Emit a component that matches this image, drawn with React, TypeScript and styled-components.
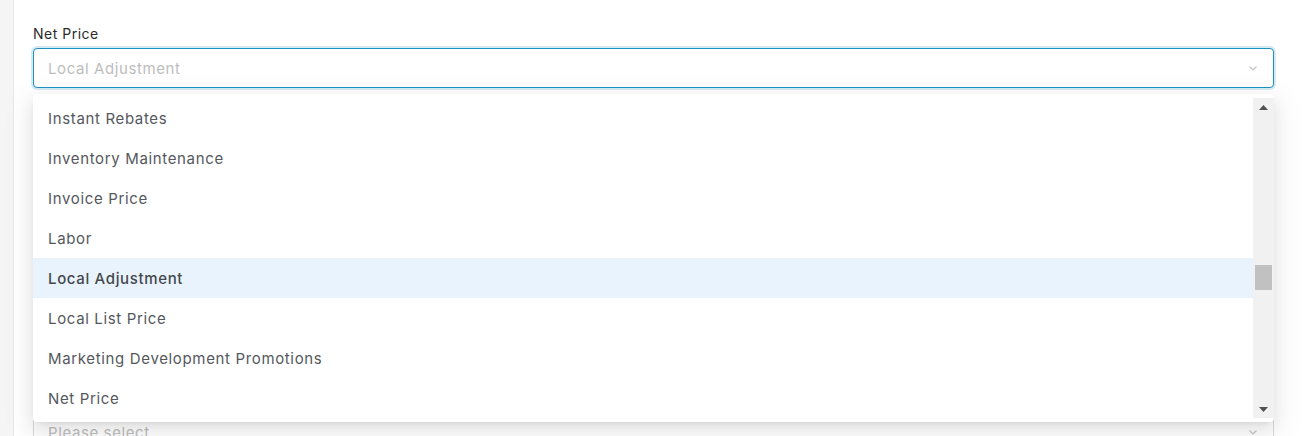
import React from "react";
import styled, { createGlobalStyle } from "styled-components";

const GlobalStyle = createGlobalStyle`
  html, body {
    margin: 0;
    padding: 0;
    background: #ffffff;
    font-family: Inter, "Noto Sans", sans-serif;
  }
`;

// option list, only the visible slice of the scrolled list
const options = [
  "Instant Rebates",
  "Inventory Maintenance",
  "Invoice Price",
  "Labor",
  "Local Adjustment",
  "Local List Price",
  "Marketing Development Promotions",
  "Net Price",
];
const selected = "Local Adjustment";

const Page = styled.div`
  display: flex;
  height: 436px;
  overflow: hidden;
`;

const SideStrip = styled.div`
  width: 13px;
  flex-shrink: 0;
  background: #f5f5f6;
  border-right: 1px solid #e9e9eb;
`;

const Content = styled.div`
  flex: 1;
  padding: 23px 31px 0 19px;
  display: flex;
  flex-direction: column;
`;

const Field = styled.div<{ $gap?: number }>`
  display: flex;
  flex-direction: column;
  margin-bottom: ${({ $gap }) => $gap ?? 24}px;
`;

const Label = styled.label`
  font-size: 14px;
  line-height: 22px;
  letter-spacing: 0.5px;
  color: #2b2b2b;
  margin-bottom: 3px;
`;

const SelectWrap = styled.div`
  position: relative;
`;

const SelectBox = styled.div<{ $focused?: boolean }>`
  height: 40px;
  box-sizing: border-box;
  border: 1px solid ${({ $focused }) => ($focused ? "#1f8fc4" : "#d9d9d9")};
  border-radius: 4px;
  box-shadow: ${({ $focused }) =>
    $focused ? "0 0 0 2px rgba(31, 143, 196, 0.18)" : "none"};
  display: flex;
  align-items: center;
  padding: 0 14px;
  font-size: 15px;
  letter-spacing: 0.6px;
  color: #bdbdbd;
  background: #fff;
`;

const Value = styled.span`
  flex: 1;
`;

const Chevron = () => (
  <svg width="12" height="12" viewBox="0 0 12 12" fill="none">
    <path d="M2.5 4.5 L6 8 L9.5 4.5" stroke="#c4c4c4" strokeWidth="1.2" />
  </svg>
);

const Dropdown = styled.div`
  position: absolute;
  top: 46px;
  left: 0;
  right: 0;
  z-index: 10;
  background: #fff;
  border-radius: 4px;
  padding: 4px 0;
  box-shadow: 0 3px 6px -4px rgba(0, 0, 0, 0.12),
    0 6px 16px 0 rgba(0, 0, 0, 0.08), 0 9px 28px 8px rgba(0, 0, 0, 0.05);
  display: flex;
`;

const OptionList = styled.div`
  flex: 1;
  display: flex;
  flex-direction: column;
`;

const Option = styled.div<{ $active?: boolean }>`
  height: 40px;
  display: flex;
  align-items: center;
  padding: 0 15px;
  font-size: 15px;
  letter-spacing: 0.65px;
  color: ${({ $active }) => ($active ? "#45484c" : "#55585d")};
  font-weight: ${({ $active }) => ($active ? 500 : 400)};
  background: ${({ $active }) => ($active ? "#e9f3fd" : "transparent")};
`;

const ScrollTrack = styled.div`
  width: 21px;
  background: #f1f1f1;
  display: flex;
  flex-direction: column;
  align-items: center;
`;

const ScrollArrow = styled.div`
  height: 18px;
  width: 100%;
  display: flex;
  align-items: center;
  justify-content: center;
`;

const ThumbArea = styled.div`
  flex: 1;
  width: 100%;
  display: flex;
  flex-direction: column;
  padding-top: 149px;
`;

const Thumb = styled.div`
  height: 25px;
  margin: 0 2px 0 2px;
  background: #c1c1c1;
`;

const Arrow = ({ down }: { down?: boolean }) => (
  <svg width="9" height="5" viewBox="0 0 9 5">
    <path
      d={down ? "M0 0 H9 L4.5 5 Z" : "M0 5 H9 L4.5 0 Z"}
      fill="#505050"
    />
  </svg>
);

const App = () => {
  return (
    <>
      <GlobalStyle />
      <Page>
        <SideStrip />
        <Content>
          <Field $gap={324}>
            <Label>Net Price</Label>
            <SelectWrap>
              <SelectBox $focused>
                <Value>Local Adjustment</Value>
                <Chevron />
              </SelectBox>
              <Dropdown>
                <OptionList>
                  {options.map((o) => (
                    <Option key={o} $active={o === selected}>
                      {o}
                    </Option>
                  ))}
                </OptionList>
                <ScrollTrack>
                  <ScrollArrow>
                    <Arrow />
                  </ScrollArrow>
                  <ThumbArea>
                    <Thumb />
                  </ThumbArea>
                  <ScrollArrow>
                    <Arrow down />
                  </ScrollArrow>
                </ScrollTrack>
              </Dropdown>
            </SelectWrap>
          </Field>
          <Field>
            <SelectBox>
              <Value>Please select</Value>
              <Chevron />
            </SelectBox>
          </Field>
        </Content>
      </Page>
    </>
  );
};

export default App;
